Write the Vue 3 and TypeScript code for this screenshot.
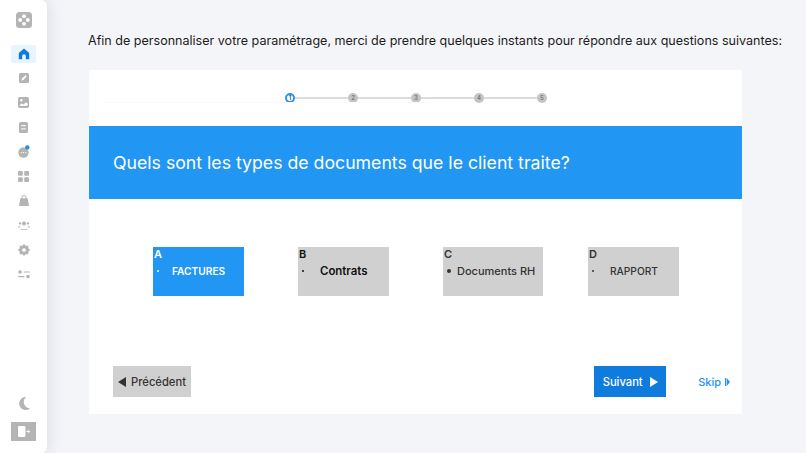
<script setup lang="ts">
const steps = [1, 2, 3, 4, 5]
const options = [
  { key: 'A', label: 'FACTURES', cls: 'active', width: 91, indent: 13, weight: 600, size: 10.2 },
  { key: 'B', label: 'Contrats', cls: 'dark', width: 91, indent: 16, weight: 600, size: 11.4 },
  { key: 'C', label: 'Documents RH', cls: '', width: 100, indent: 6, weight: 500, size: 11 },
  { key: 'D', label: 'RAPPORT', cls: '', width: 91, indent: 16, weight: 500, size: 10.2 },
]
</script>

<template>
  <div class="page">
    <aside class="sidebar">
      <svg class="logo" viewBox="0 0 16 16" width="16" height="16">
        <rect width="16" height="16" rx="3.5" fill="#b4b4b4" />
        <circle cx="8" cy="4.2" r="1.9" fill="#fff" />
        <circle cx="8" cy="11.8" r="1.9" fill="#fff" />
        <circle cx="4.2" cy="8" r="1.9" fill="#fff" />
        <circle cx="11.8" cy="8" r="1.9" fill="#fff" />
      </svg>
      <nav class="nav">
        <a class="nav-item current">
          <svg viewBox="0 0 12 12" width="12" height="12"><path d="M6 .6 11.2 5v6.2H7.8V8a1.8 1.8 0 0 0-3.6 0v3.2H.8V5z" fill="#0f7bdc" /></svg>
        </a>
        <a class="nav-item">
          <svg viewBox="0 0 10 10" width="10" height="10"><rect width="10" height="10" rx="1.6" fill="#b4b4b4" /><path d="M2.3 7.7 3 5.6 6.4 2.3 7.7 3.6 4.4 7z" fill="#fff" /></svg>
        </a>
        <a class="nav-item">
          <svg viewBox="0 0 11 11" width="11" height="11"><rect width="11" height="11" rx="1.8" fill="#b4b4b4" /><circle cx="3.4" cy="3.3" r="1.2" fill="#fff" /><path d="M1.2 8.4 3.6 6.4 5.4 7.6 8 5.2 9.8 6.8V8.2C8 9.2 3 9.4 1.2 8.4z" fill="#fff" /></svg>
        </a>
        <a class="nav-item">
          <svg viewBox="0 0 9 11" width="9" height="11"><rect width="9" height="11" rx="1.6" fill="#b4b4b4" /><rect x="2" y="3.2" width="5" height="1" fill="#fff" /><rect x="2" y="6.4" width="5" height="1" fill="#fff" /></svg>
        </a>
        <a class="nav-item">
          <svg viewBox="0 0 12 13" width="12" height="13"><circle cx="5.5" cy="7.5" r="5.2" fill="#b4b4b4" /><circle cx="3.3" cy="7.6" r=".7" fill="#fff" /><circle cx="5.5" cy="7.6" r=".7" fill="#fff" /><circle cx="7.7" cy="7.6" r=".7" fill="#fff" /><circle cx="9.3" cy="2.4" r="2.2" fill="#1f8fe8" /></svg>
        </a>
        <a class="nav-item">
          <svg viewBox="0 0 11 11" width="11" height="11" fill="#b4b4b4"><rect width="4.8" height="4.8" rx="1.1" /><rect x="6.2" width="4.8" height="4.8" rx="1.1" /><rect y="6.2" width="4.8" height="4.8" rx="1.1" /><rect x="6.2" y="6.2" width="4.8" height="4.8" rx="1.1" /></svg>
        </a>
        <a class="nav-item">
          <svg viewBox="0 0 10 11" width="10" height="11"><path d="M1.4 3.2H8.6L10 10a1 1 0 0 1-1 1H1A1 1 0 0 1 0 10z" fill="#b4b4b4" /><path d="M3 4V2.6a2 2 0 0 1 4 0V4" fill="none" stroke="#b4b4b4" stroke-width="1" /></svg>
        </a>
        <a class="nav-item">
          <svg viewBox="0 0 12 10" width="12" height="10" fill="#b4b4b4"><circle cx="6" cy="3.4" r="2" /><circle cx="2" cy="3.4" r="1.2" /><circle cx="10" cy="3.4" r="1.2" /><path d="M3 8.4C4 9.6 8 9.6 9 8.4L9.6 9.6C8 10.2 4 10.2 2.4 9.6z" /><rect y="6.4" width="2" height="1" /><rect x="10" y="6.4" width="2" height="1" /></svg>
        </a>
        <a class="nav-item">
          <svg viewBox="0 0 11 11" width="12" height="12"><path d="M5.5 0 7 1.7 9.4 1.6 9.5 4 11 5.5 9.5 7 9.4 9.4 7 9.3 5.5 11 4 9.3 1.6 9.4 1.5 7 0 5.5 1.5 4 1.6 1.6 4 1.7z" fill="#b4b4b4" /><circle cx="5.5" cy="5.5" r="1.7" fill="#fff" /></svg>
        </a>
        <a class="nav-item">
          <svg viewBox="0 0 12 9" width="12" height="9" fill="#b4b4b4"><circle cx="2" cy="2" r="1.8" /><rect x="5.5" y="1.4" width="6.5" height="1.2" rx=".6" /><rect y="6" width="6.5" height="1.2" rx=".6" /><circle cx="10" cy="6.6" r="1.8" /></svg>
        </a>
      </nav>
      <div class="side-bottom">
        <svg viewBox="0 0 12 13" width="12" height="13"><path d="M8.2 0A6.5 6.5 0 1 0 12 11.4 6.4 6.4 0 0 1 8.2 0z" fill="#b4b4b4" /></svg>
        <button class="logout" type="button">
          <svg viewBox="0 0 14 11" width="14" height="11"><rect x="1" y="0" width="7.4" height="11" rx="1.2" fill="#fff" /><path d="M9.4 5.5H12.4M11.2 4 12.8 5.5 11.2 7" fill="none" stroke="#fff" stroke-width="1" /></svg>
        </button>
      </div>
    </aside>

    <main class="main">
      <p class="intro">Afin de personnaliser votre paramétrage, merci de prendre quelques instants pour répondre aux questions suivantes:</p>
      <section class="card">
        <div class="stepper">
          <template v-for="(s, i) in steps" :key="s">
            <span class="dot" :class="{ on: i === 0 }">{{ s }}</span>
            <span v-if="i < steps.length - 1" class="link"></span>
          </template>
        </div>
        <h1 class="banner">Quels sont les types de documents que le client traite?</h1>
        <div class="options">
          <div v-for="o in options" :key="o.key" class="cell">
            <div class="option" :class="o.cls" :style="{ width: o.width + 'px' }">
              <span class="letter">{{ o.key }}</span>
              <span class="row">
                <span class="bullet" :class="{ big: o.key === 'C' }"></span>
                <span class="label" :style="{ marginLeft: o.indent + 'px', fontWeight: o.weight, fontSize: o.size + 'px' }">{{ o.label }}</span>
              </span>
            </div>
          </div>
        </div>
        <div class="actions">
          <button class="btn prev" type="button"><span class="tri left"></span>Précédent</button>
          <div class="right">
            <button class="btn next" type="button">Suivant<span class="tri"></span></button>
            <a class="skip">Skip<svg viewBox="0 0 5 8" width="5" height="8"><path d="M0 0 1.2 0V8H0zM1.8 0 5 4 1.8 8z" fill="#2196f3" /></svg></a>
          </div>
        </div>
      </section>
    </main>
  </div>
</template>

<style>
html, body { margin: 0; background: #f4f5f9; }
</style>

<style scoped>
.page {
  display: flex;
  width: 806px;
  height: 453px;
  overflow: hidden;
  background: #f4f5f9;
  font-family: Inter, "Noto Sans", sans-serif;
  color: #333;
}
.sidebar {
  width: 47px;
  flex: none;
  background: #fff;
  box-shadow: 2px 0 16px rgba(60, 60, 90, 0.13);
  border-radius: 0 6px 6px 0;
  display: flex;
  flex-direction: column;
  align-items: center;
  padding-top: 12px;
  box-sizing: border-box;
}
.logo { display: block; }
.nav {
  display: flex;
  flex-direction: column;
  align-items: center;
  margin-top: 17px;
}
.nav-item {
  width: 25px;
  height: 24.5px;
  display: flex;
  align-items: center;
  justify-content: center;
}
.nav-item.current {
  height: 18px;
  margin-bottom: 3px;
  background: #e8f4fe;
  border-radius: 2px;
}
.side-bottom {
  margin-top: auto;
  padding-bottom: 12px;
  display: flex;
  flex-direction: column;
  align-items: center;
  gap: 12px;
}
.logout {
  width: 25px;
  height: 19px;
  border: 0;
  padding: 0;
  background: #b4b4b4;
  display: flex;
  align-items: center;
  justify-content: center;
}
.main {
  flex: 1;
  padding: 32px 0 0 41px;
  min-width: 0;
}
.intro {
  margin: 0 0 21px;
  font-size: 12.55px;
  line-height: 17px;
  color: #1c1c1c;
  white-space: nowrap;
}
.card {
  width: 653px;
  height: 344px;
  margin-left: 1px;
  background: #fff;
  position: relative;
}
.stepper {
  height: 56px;
  box-sizing: border-box;
  padding: 23px 0 0 196px;
  display: flex;
  align-items: flex-start;
}
.stepper::before {
  content: "";
  position: absolute;
  left: 16px;
  top: 32px;
  width: 325px;
  height: 1px;
  background: #fafafa;
}
.dot {
  width: 10px;
  height: 10px;
  flex: none;
  border-radius: 50%;
  background: #c4c4c4;
  color: #777;
  font-size: 6px;
  font-weight: 600;
  line-height: 10px;
  text-align: center;
}
.dot.on {
  background: #fff;
  color: #444;
  box-shadow: inset 0 0 0 2px #2196f3;
}
.link {
  width: 53px;
  height: 2px;
  margin-top: 4px;
  background: #dcdcdc;
  flex: none;
}
.banner {
  margin: 0;
  height: 73px;
  box-sizing: border-box;
  padding-left: 24px;
  display: flex;
  align-items: center;
  background: #2196f3;
  color: #fff;
  font-size: 17.7px;
  font-weight: 400;
  white-space: nowrap;
}
.options {
  display: grid;
  grid-template-columns: repeat(4, 145px);
  padding: 48px 0 0 64px;
}
.option {
  height: 49px;
  box-sizing: border-box;
  background: #d0d0d0;
  padding: 0 1px;
  display: flex;
  flex-direction: column;
  color: #333;
}
.option.active { background: #2196f3; color: #fff; }
.option.dark { color: #111; }
.letter { font-size: 11px; font-weight: 600; line-height: 14px; }
.row { display: flex; align-items: center; margin-top: 2px; padding-left: 3px; white-space: nowrap; }
.bullet { width: 2px; height: 2px; border-radius: 50%; background: currentColor; flex: none; }
.bullet.big { width: 4px; height: 4px; }
.label { line-height: 16px; }
.actions {
  display: flex;
  justify-content: space-between;
  padding: 70px 12px 0 24px;
}
.right { display: flex; align-items: center; gap: 32px; }
.btn {
  height: 31px;
  border: 0;
  padding: 0;
  font: inherit;
  font-size: 11.2px;
  font-weight: 500;
  display: flex;
  align-items: center;
  justify-content: center;
}
.prev { width: 78px; background: #d0d0d0; color: #333; gap: 5px; }
.next { width: 72px; background: #0f7bdc; color: #fff; gap: 7px; }
.tri {
  width: 0;
  height: 0;
  border-top: 5px solid transparent;
  border-bottom: 5px solid transparent;
  border-left: 8px solid #fff;
}
.tri.left {
  border-left: 0;
  border-right: 8px solid #333;
}
.skip {
  display: flex;
  align-items: center;
  gap: 4px;
  font-size: 11px;
  font-weight: 500;
  color: #2196f3;
}
</style>
